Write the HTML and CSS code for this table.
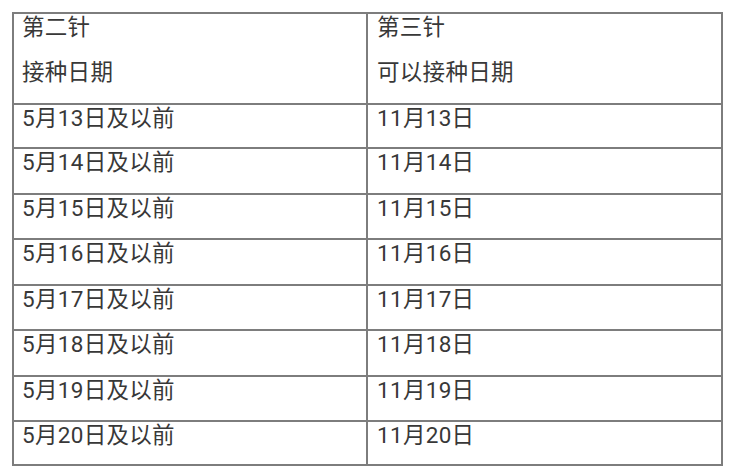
FILE: index.html
```html
<!DOCTYPE html>
<html lang="zh-CN">
<head>
<meta charset="utf-8">
<title>接种日期</title>
<link rel="stylesheet" href="styles.css">
</head>
<body>
<div class="sheet">
  <div class="cell head">
    <div class="line">第二针</div>
    <div class="line">接种日期</div>
  </div>
  <div class="cell head right">
    <div class="line">第三针</div>
    <div class="line">可以接种日期</div>
  </div>
  <div class="cell">5月13日及以前</div><div class="cell right">11月13日</div>
  <div class="cell">5月14日及以前</div><div class="cell right">11月14日</div>
  <div class="cell">5月15日及以前</div><div class="cell right">11月15日</div>
  <div class="cell">5月16日及以前</div><div class="cell right">11月16日</div>
  <div class="cell">5月17日及以前</div><div class="cell right">11月17日</div>
  <div class="cell">5月18日及以前</div><div class="cell right">11月18日</div>
  <div class="cell">5月19日及以前</div><div class="cell right">11月19日</div>
  <div class="cell">5月20日及以前</div><div class="cell right">11月20日</div>
</div>
</body>
</html>
```
FILE: styles.css
```css
html, body {
  margin: 0;
  padding: 0;
  background: #ffffff;
}
body {
  padding: 12px 0 0 12px;
  font-family: Roboto, "Noto Sans CJK SC", sans-serif;
  font-size: 22.5px;
  color: #383838;
}
.sheet {
  width: 707px;
  border: 2px solid #7d7d7d;
  display: grid;
  grid-template-columns: 352px 355px;
  grid-template-rows: 89px 44px 46px 45px 46px 45px 46px 45px 44px;
}
.cell {
  line-height: 26px;
  padding: 0 0 0 8px;
  border-top: 2px solid #7d7d7d;
  overflow: hidden;
  white-space: nowrap;
  letter-spacing: 0.3px;
}
.head {
  border-top: none;
}
.right {
  border-left: 2px solid #7d7d7d;
  padding-left: 9px;
}
.line {
  height: 45px;
}
```
